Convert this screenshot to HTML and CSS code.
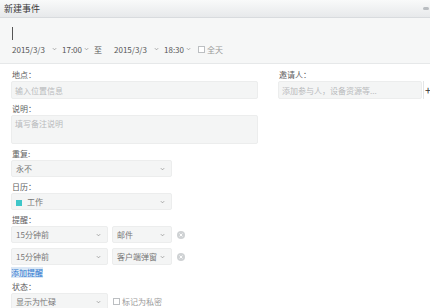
FILE: index.html
```html
<!DOCTYPE html>
<html lang="zh-CN">
<head>
    <meta charset="UTF-8">
    <meta name="viewport" content="width=device-width, initial-scale=1.0">
    <title>新建事件</title>
    <link rel="stylesheet" href="styles.css">
</head>
<body>

    <div class="header">
        <span class="title">新建事件</span>
        <span class="header-icon"></span>
    </div>

    <div class="top">
        <div class="cursor"></div>
        <div class="time-row">
            <span class="pick pick-date">2015/3/3 <svg class="chev" viewBox="0 0 6 4"><polyline points="1,1 3,3 5,1"/></svg></span>
            <span class="pick pick-time">17:00 <svg class="chev" viewBox="0 0 6 4"><polyline points="1,1 3,3 5,1"/></svg></span>
            <span class="to">至</span>
            <span class="pick pick-date">2015/3/3 <svg class="chev" viewBox="0 0 6 4"><polyline points="1,1 3,3 5,1"/></svg></span>
            <span class="pick pick-time">18:30 <svg class="chev" viewBox="0 0 6 4"><polyline points="1,1 3,3 5,1"/></svg></span>
            <span class="check"><span class="box"></span>全天</span>
        </div>
    </div>

    <div class="main">
        <div class="left">
            <div class="label">地点：</div>
            <div class="input">输入位置信息</div>

            <div class="label">说明：</div>
            <div class="input textarea">填写备注说明</div>

            <div class="label">重复:</div>
            <div class="select wide"><span>永不</span><svg class="chev" viewBox="0 0 6 4"><polyline points="1,1 3,3 5,1"/></svg></div>

            <div class="label">日历：</div>
            <div class="select wide"><span><i class="swatch"></i>工作</span><svg class="chev" viewBox="0 0 6 4"><polyline points="1,1 3,3 5,1"/></svg></div>

            <div class="label">提醒：</div>
            <div class="remind">
                <div class="select when"><span>15分钟前</span><svg class="chev" viewBox="0 0 6 4"><polyline points="1,1 3,3 5,1"/></svg></div>
                <div class="select how"><span>邮件</span><svg class="chev" viewBox="0 0 6 4"><polyline points="1,1 3,3 5,1"/></svg></div>
                <svg class="remove" viewBox="0 0 10 10"><circle cx="5" cy="5" r="5"/><path d="M3.2 3.2L6.8 6.8M6.8 3.2L3.2 6.8"/></svg>
            </div>
            <div class="remind">
                <div class="select when"><span>15分钟前</span><svg class="chev" viewBox="0 0 6 4"><polyline points="1,1 3,3 5,1"/></svg></div>
                <div class="select how"><span>客户端弹窗</span><svg class="chev" viewBox="0 0 6 4"><polyline points="1,1 3,3 5,1"/></svg></div>
                <svg class="remove" viewBox="0 0 10 10"><circle cx="5" cy="5" r="5"/><path d="M3.2 3.2L6.8 6.8M6.8 3.2L3.2 6.8"/></svg>
            </div>
            <div class="add"><a href="#">添加提醒</a></div>

            <div class="label status-label">状态：</div>
            <div class="status">
                <div class="select when"><span>显示为忙碌</span><svg class="chev" viewBox="0 0 6 4"><polyline points="1,1 3,3 5,1"/></svg></div>
                <span class="check"><span class="box"></span>标记为私密</span>
            </div>
        </div>

        <div class="right">
            <div class="label">邀请人：</div>
            <div class="invite">
                <div class="input">添加参与人，设备资源等...</div>
                <span class="plus">+</span>
            </div>
        </div>
    </div>

</body>
</html>
```

FILE: styles.css
```css
body {
    margin: 0;
    font-family: "Noto Sans CJK SC", "Noto Sans", sans-serif;
    font-size: 8px;
    color: #666;
    background: #fff;
    overflow: hidden;
}
.header {
    height: 17px;
    display: flex;
    align-items: center;
    justify-content: space-between;
    padding: 0 0 0 4px;
    background: linear-gradient(#f9fafa, #e7e9eb);
    border-bottom: 1px solid #d8dbde;
}
.title {
    font-size: 9px;
    color: #3a3a3a;
}
.header-icon {
    width: 6px;
    height: 3px;
    margin-right: 1px;
    border-radius: 2px;
    background: #b9bdc1;
}
.top {
    height: 46px;
    padding: 9px 0 0 12px;
    box-sizing: border-box;
    background: #f6f7f7;
    border-bottom: 1px solid #e6e8e9;
}
.cursor {
    width: 1px;
    height: 13px;
    background: #555;
}
.time-row {
    display: flex;
    align-items: center;
    height: 12px;
    margin-top: 3px;
    color: #555;
}
.pick {
    display: inline-flex;
    align-items: center;
    justify-content: space-between;
}
.pick-date {
    width: 45px;
    margin-right: 5px;
}
.pick-time {
    width: 27px;
    margin-right: 5px;
}
.to {
    margin: 0 12px 0 0;
}
.pick-time + .check {
    margin-left: 2px;
}
.chev {
    width: 5px;
    height: 4px;
    fill: none;
    stroke: #999;
    stroke-width: 1;
}
.check {
    display: inline-flex;
    align-items: center;
    color: #999;
}
.box {
    width: 5px;
    height: 5px;
    margin-right: 2px;
    border: 1px solid #bcbfc2;
    background: #fff;
}
.main {
    display: grid;
    grid-template-columns: 270px 1fr;
    padding-top: 1px;
}
.left {
    padding-left: 11px;
}
.right {
    padding-left: 8px;
}
.label {
    height: 10px;
    line-height: 10px;
    padding: 5px 0 1px 1px;
    color: #606060;
}
.input {
    height: 18px;
    line-height: 18px;
    padding-left: 3px;
    box-sizing: border-box;
    background: #f4f5f5;
    border: 1px solid #eceded;
    border-radius: 2px;
    color: #b8babc;
    width: 247px;
}
.textarea {
    height: 29px;
    line-height: 15px;
}
.select {
    height: 17px;
    display: flex;
    align-items: center;
    justify-content: space-between;
    padding: 0 6px 0 4px;
    box-sizing: border-box;
    background: #f4f5f5;
    border: 1px solid #eceded;
    border-radius: 2px;
    color: #777;
}
.wide {
    width: 161px;
}
.swatch {
    display: inline-block;
    width: 6px;
    height: 6px;
    margin-right: 5px;
    background: #3ec6c9;
    vertical-align: -1px;
}
.remind {
    display: flex;
    align-items: center;
    margin-bottom: 5px;
}
.when {
    width: 97px;
    margin-right: 4px;
}
.how {
    width: 60px;
}
.remove {
    width: 8px;
    height: 8px;
    margin-left: 5px;
}
.remove circle {
    fill: #cfd2d4;
}
.remove path {
    stroke: #fff;
    stroke-width: 1.2;
}
.add {
    height: 12px;
    line-height: 12px;
    margin-top: -4px;
    padding-top: 1px;
}
.add a {
    color: #2b78d0;
    text-decoration: none;
    background: #dbe8f6;
}
.status-label {
    padding-top: 3px;
}
.status {
    display: flex;
    align-items: center;
}
.status .when {
    margin-right: 5px;
}
.invite {
    display: flex;
    align-items: center;
}
.invite .input {
    width: 144px;
    flex-shrink: 0;
}
.plus {
    flex-shrink: 0;
    width: 8px;
    height: 18px;
    margin-left: 1px;
    line-height: 18px;
    text-align: center;
    font-size: 11px;
    color: #333;
    background: #fff;
    border-left: 1px solid #e3e5e6;
}
```
